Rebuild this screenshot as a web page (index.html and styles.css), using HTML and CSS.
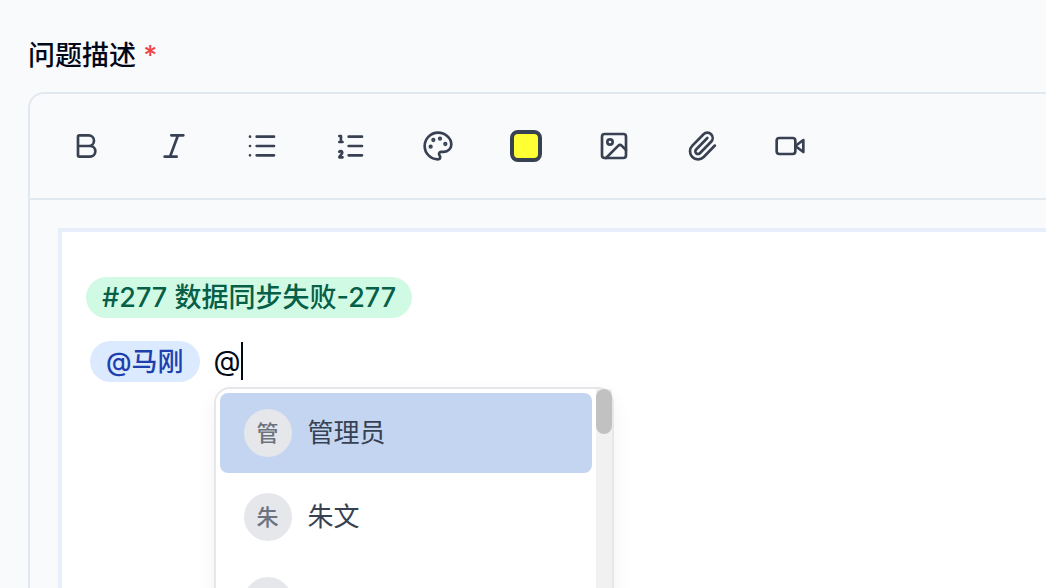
FILE: index.html
```html
<!DOCTYPE html>
<html lang="zh-CN">
  <head>
    <meta charset="UTF-8" />
    <meta name="viewport" content="width=device-width, initial-scale=1.0" />
    <title>问题描述</title>
    <link rel="stylesheet" href="styles.css">
  </head>
  <body>
    <div class="field">
      <div class="field-label" id="desc-label">问题描述 <span class="required">*</span></div>
      <div class="editor">
        <div class="toolbar" role="toolbar">
          <button type="button" class="tool" aria-label="粗体">
            <svg class="icon" viewBox="0 0 24 24"><path d="M6 12h9a4 4 0 0 1 0 8H7a1 1 0 0 1-1-1V5a1 1 0 0 1 1-1h7a4 4 0 0 1 0 8"/></svg>
          </button>
          <button type="button" class="tool" aria-label="斜体">
            <svg class="icon" viewBox="0 0 24 24"><path d="M19 4h-9M14 20H5M15 4 9 20"/></svg>
          </button>
          <button type="button" class="tool" aria-label="无序列表">
            <svg class="icon" viewBox="0 0 24 24"><path d="M3 5h.01M3 12h.01M3 19h.01M8 5h13M8 12h13M8 19h13"/></svg>
          </button>
          <button type="button" class="tool" aria-label="有序列表">
            <svg class="icon" viewBox="0 0 24 24"><path d="M11 5h10M11 12h10M11 19h10M4 4.500h1.200V9M4 9h2.400M6.400 20.500H4c0-1 2.200-2.100 2.200-3.600 0-1.300-1.400-1.400-2.200-.6"/></svg>
          </button>
          <button type="button" class="tool" aria-label="文字颜色">
            <svg class="icon" viewBox="0 0 24 24"><path d="M12 2C6.500 2 2 6.500 2 12s4.500 10 10 10c.926 0 1.648-.746 1.648-1.688 0-.437-.18-.835-.437-1.125-.29-.289-.438-.652-.438-1.125a1.640 1.640 0 0 1 1.668-1.668h1.996c3.051 0 5.555-2.503 5.555-5.554C21.965 6.012 17.461 2 12 2z"/><g class="dots"><circle cx="13.500" cy="6.500" r=".6"/><circle cx="17.500" cy="10.500" r=".6"/><circle cx="6.500" cy="12.500" r=".6"/><circle cx="8.500" cy="7.500" r=".6"/></g></svg>
          </button>
          <button type="button" class="tool" aria-label="背景颜色"><span class="swatch"></span></button>
          <button type="button" class="tool" aria-label="图片">
            <svg class="icon" viewBox="0 0 24 24"><rect x="3" y="3" width="18" height="18" rx="2"/><circle cx="9" cy="9" r="2"/><path d="m21 15-3.086-3.086a2 2 0 0 0-2.828 0L6 21"/></svg>
          </button>
          <button type="button" class="tool" aria-label="附件">
            <svg class="icon" viewBox="0 0 24 24"><path d="m16 6-8.414 8.586a2 2 0 0 0 2.829 2.829l8.414-8.586a4 4 0 1 0-5.657-5.657l-8.379 8.551a6 6 0 1 0 8.485 8.485l8.379-8.551"/></svg>
          </button>
          <button type="button" class="tool" aria-label="视频">
            <svg class="icon" viewBox="0 0 24 24"><rect x="2" y="6" width="14" height="12" rx="2"/><path d="m22 7.500-6 4.500 6 4.500z"/></svg>
          </button>
        </div>
        <div class="content" contenteditable="true" role="textbox" aria-multiline="true" aria-labelledby="desc-label">
          <p class="line"><span class="tag tag-issue">#277 数据同步失败-277</span></p>
          <p class="line line-mention">
            <span class="tag tag-user">@马刚</span>
            <span class="query">@<span class="caret"></span>
              <span class="mention-menu" contenteditable="false">
                <span class="mention-list" role="listbox">
                  <button type="button" class="mention-item active" role="option" aria-selected="true"><span class="avatar">管</span>管理员</button>
                  <button type="button" class="mention-item" role="option"><span class="avatar">朱</span>朱文</button>
                  <button type="button" class="mention-item" role="option"><span class="avatar"></span></button>
                </span>
                <span class="scroll-track"><span class="scroll-thumb"></span></span>
              </span>
            </span>
          </p>
        </div>
      </div>
    </div>
  </body>
</html>
```
FILE: styles.css
```css
* {
  box-sizing: border-box;
}
body {
  margin: 0;
  height: 100vh;
  overflow: hidden;
  background-color: #f9fafc;
  color: #020817;
  font-family: Inter, "Noto Sans CJK SC", sans-serif;
  font-size: 27px;
  line-height: 40px;
}
button {
  font: inherit;
  color: inherit;
  border: 0;
  background: none;
}
.field {
  display: flex;
  flex-direction: column;
  min-height: 100vh;
  padding: 36px 0 0 28px;
}
.field-label {
  font-weight: 500;
  margin-bottom: 16px;
}
.required {
  color: #ef4444;
}
.editor {
  flex: 1;
  display: flex;
  flex-direction: column;
  border: 2px solid #e2e8f0;
  border-width: 2px 0 0 2px;
  border-top-left-radius: 16px;
}
.toolbar {
  display: flex;
  gap: 8px;
  padding: 16px;
  border-bottom: 2px solid #e2e8f0;
}
.tool {
  display: flex;
  align-items: center;
  justify-content: center;
  width: 80px;
  height: 72px;
  padding: 0;
  color: #374151;
}
.icon {
  width: 32px;
  height: 32px;
  fill: none;
  stroke: currentColor;
  stroke-width: 2;
  stroke-linecap: round;
  stroke-linejoin: round;
}
.dots {
  fill: currentColor;
}
.swatch {
  width: 32px;
  height: 32px;
  border: 4px solid #374151;
  border-radius: 8px;
  background-color: #ffff33;
}
.content {
  flex: 1;
  margin: 28px 0 0 28px;
  padding: 33px 24px 0;
  border: 4px solid #e8effb;
  border-width: 4px 0 0 4px;
  background-color: #fff;
  outline: none;
}
.line {
  display: flex;
  align-items: center;
  height: 64px;
  margin: 0;
}
.line-mention {
  gap: 14px;
  padding-left: 4px;
}
.tag {
  padding: 0 16px;
  border-radius: 21px;
  font-weight: 500;
  line-height: 41px;
}
.tag-issue {
  background-color: #d1fae5;
  color: #065f46;
}
.tag-user {
  background-color: #dbeafe;
  color: #1e40af;
  font-size: 26px;
}
.query {
  display: flex;
  align-items: center;
  position: relative;
  font-size: 28px;
}
.caret {
  width: 2px;
  height: 38px;
  background-color: #020817;
}
.mention-menu {
  position: absolute;
  top: 46px;
  left: 0;
  display: flex;
  width: 400px;
  border: 2px solid #e5e7eb;
  border-radius: 16px;
  background-color: #fff;
  box-shadow: 0 8px 20px rgba(0, 0, 0, 0.06);
  color: #374151;
  font-size: 26px;
}
.mention-list {
  flex: 1;
  display: flex;
  flex-direction: column;
  gap: 4px;
  padding: 4px;
}
.mention-item {
  display: flex;
  align-items: center;
  gap: 16px;
  height: 80px;
  padding: 0 24px;
  border-radius: 8px;
}
.active {
  background-color: #c4d5f1;
}
.avatar {
  display: flex;
  align-items: center;
  justify-content: center;
  width: 48px;
  height: 48px;
  border-radius: 50%;
  background-color: #e5e7eb;
  color: #6b7280;
  font-size: 22px;
  font-weight: 500;
}
.scroll-track {
  width: 16px;
  background-color: #f1f1f1;
}
.scroll-thumb {
  display: block;
  height: 45px;
  border-radius: 8px;
  background-color: #c1c1c1;
}
```
